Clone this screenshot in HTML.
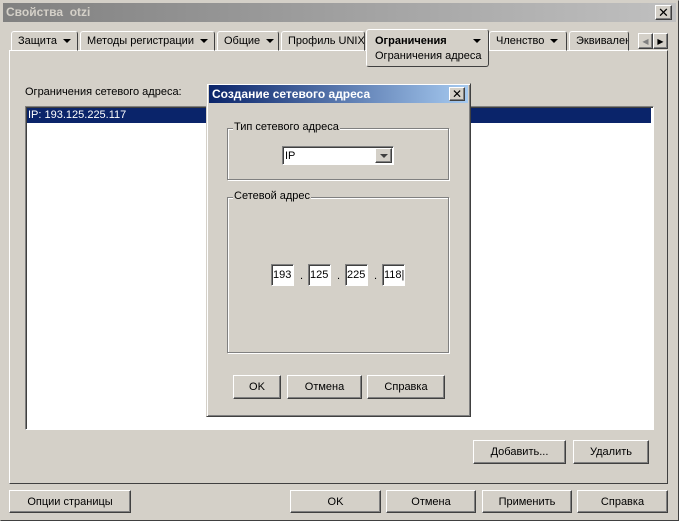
<!DOCTYPE html>
<html><head><meta charset="utf-8"><style>
*{box-sizing:border-box;margin:0;padding:0}
body{width:679px;height:521px;background:#d4d0c8;font-family:"Liberation Sans","DejaVu Sans",sans-serif;font-size:11px;color:#000;position:relative;overflow:hidden}
.a{position:absolute}
.raised{background:#d4d0c8;border:1px solid;border-color:#fff #404040 #404040 #fff;box-shadow:inset -1px -1px 0 #808080}
.sunk{background:#fff;border:1px solid;border-color:#808080 #fff #fff #808080;box-shadow:inset 1px 1px 0 #404040}
.btn{display:flex;align-items:center;justify-content:center}
.tab{position:absolute;top:31px;height:20px;border:1px solid;border-color:#fff #404040 transparent #fff;border-radius:3px 3px 0 0;padding:3px 0 0 6px;white-space:nowrap;overflow:hidden}
.tri{display:inline-block;width:0;height:0;border-left:4px solid transparent;border-right:4px solid transparent;border-top:4px solid #000;vertical-align:middle;margin-left:6px}
.grp{position:absolute;border:1px solid #808080;box-shadow:1px 1px 0 #fff,inset 1px 1px 0 #fff}
.grp span{position:absolute;top:-8px;left:5px;background:#d4d0c8;padding:0 1px}
.ip{position:absolute;top:264px;width:23px;height:22px;padding:4px 0 0 1px}
</style></head><body>
<div class="a" style="left:0;top:0;width:679px;height:521px;border:1px solid;border-color:#d4d0c8 #404040 #404040 #d4d0c8"></div>
<div class="a" style="left:3px;top:3px;width:673px;height:19px;background:linear-gradient(90deg,#808080,#c0c0c0);color:#d4d0c8;font-weight:bold;font-size:12px;padding:2px 3px">Свойства&nbsp; otzi</div>
<div class="a raised btn" style="left:655px;top:5px;width:17px;height:15px;font-size:13px;font-weight:bold">✕</div>

<div class="a" style="left:9px;top:50px;width:659px;height:434px;border:1px solid;border-color:#fff #404040 #404040 #fff"></div>
<div class="tab" style="left:11px;width:67px">Защита<span class="tri"></span></div>
<div class="tab" style="left:80px;width:135px">Методы регистрации<span class="tri"></span></div>
<div class="tab" style="left:217px;width:62px">Общие<span class="tri"></span></div>
<div class="tab" style="left:281px;width:84px">Профиль UNIX</div>
<div class="a" style="left:366px;top:29px;width:123px;height:38px;background:#d4d0c8;border:1px solid;border-color:#fff #404040 #404040 #fff;border-radius:3px;padding:4px 0 0 8px;line-height:15px"><b>Ограничения</b><span class="tri" style="margin-left:26px"></span><br>Ограничения адреса</div>
<div class="tab" style="left:489px;width:78px">Членство<span class="tri"></span></div>
<div class="tab" style="left:569px;width:60px">Эквивалент</div>
<div class="a raised btn" style="left:638px;top:33px;width:15px;height:16px;font-size:8px;color:#808080">◀</div>
<div class="a raised btn" style="left:653px;top:33px;width:15px;height:16px;font-size:8px">▶</div>

<div class="a" style="left:25px;top:86px">Ограничения сетевого адреса:</div>
<div class="a sunk" style="left:25px;top:106px;width:629px;height:324px"></div>
<div class="a" style="left:27px;top:108px;width:624px;height:15px;background:#0a246a;color:#fff;padding:1px 1px">IP: 193.125.225.117</div>

<div class="a raised btn" style="left:473px;top:440px;width:93px;height:24px">Добавить...</div>
<div class="a raised btn" style="left:573px;top:440px;width:76px;height:24px">Удалить</div>

<div class="a raised btn" style="left:9px;top:490px;width:122px;height:23px">Опции страницы</div>
<div class="a raised btn" style="left:290px;top:490px;width:91px;height:23px">OK</div>
<div class="a raised btn" style="left:386px;top:490px;width:90px;height:23px">Отмена</div>
<div class="a raised btn" style="left:482px;top:490px;width:90px;height:23px">Применить</div>
<div class="a raised btn" style="left:577px;top:490px;width:91px;height:23px">Справка</div>

<div class="a" style="left:206px;top:83px;width:265px;height:334px;background:#d4d0c8;border:1px solid;border-color:#d4d0c8 #404040 #404040 #d4d0c8;box-shadow:inset 1px 1px 0 #fff,inset -1px -1px 0 #808080"></div>
<div class="a" style="left:209px;top:85px;width:259px;height:18px;background:linear-gradient(90deg,#0a246a,#a6caf0);color:#fff;font-weight:bold;font-size:12px;padding:2px 3px">Создание сетевого адреса</div>
<div class="a raised btn" style="left:449px;top:87px;width:16px;height:14px;font-size:12px;font-weight:bold">✕</div>

<div class="grp" style="left:227px;top:128px;width:222px;height:52px"><span>Тип сетевого адреса</span></div>
<div class="a sunk" style="left:282px;top:146px;width:112px;height:19px;padding:3px 2px">IP</div>
<div class="a raised btn" style="left:375px;top:148px;width:17px;height:15px"><span class="tri" style="margin:0;border-top-color:#404040"></span></div>

<div class="grp" style="left:227px;top:197px;width:222px;height:156px"><span>Сетевой адрес</span></div>
<div class="ip sunk" style="left:271px">193</div>
<div class="a" style="left:300px;top:270px">.</div>
<div class="ip sunk" style="left:308px">125</div>
<div class="a" style="left:337px;top:270px">.</div>
<div class="ip sunk" style="left:345px">225</div>
<div class="a" style="left:374px;top:270px">.</div>
<div class="ip sunk" style="left:382px">118|</div>

<div class="a raised btn" style="left:233px;top:375px;width:48px;height:24px">OK</div>
<div class="a raised btn" style="left:287px;top:375px;width:75px;height:24px">Отмена</div>
<div class="a raised btn" style="left:367px;top:375px;width:78px;height:24px">Справка</div>
</body></html>
